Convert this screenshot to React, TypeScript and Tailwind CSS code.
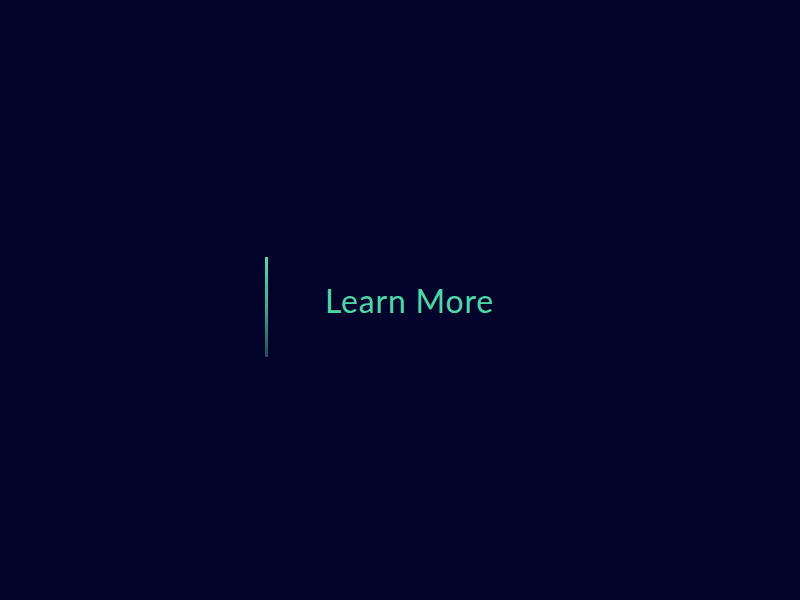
export default function App() {
    return (
        <div className="w-[800px] h-[600px] bg-[#01032a] flex justify-center pt-[257px]">
            <div className="w-[270px] h-[100px] flex">
                <div className="w-[3px] h-[100px] bg-gradient-to-b from-[#52d8aa] via-[#3fae8e] to-[#1f4f57]" />
                <div className="pl-[57px] h-[88px] flex items-center">
                    <span className="text-[32px] leading-none text-[#4fd6a6] font-['Lato',sans-serif] tracking-[0.8px]">
                        Learn More
                    </span>
                </div>
            </div>
        </div>
    );
}
